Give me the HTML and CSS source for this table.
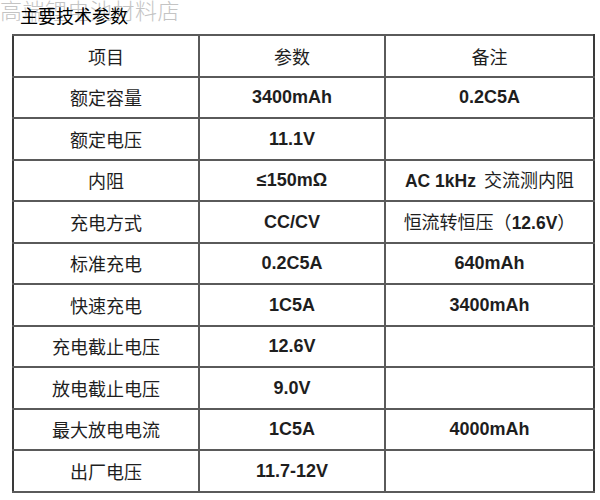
FILE: index.html
```html
<!DOCTYPE html>
<html lang="zh">
<head>
<meta charset="utf-8">
<link rel="stylesheet" href="styles.css">
</head>
<body>
<div class="page">
  <div class="watermark">高端锂电池材料店</div>
  <h1 class="title">主要技术参数</h1>
  <table class="spec">
    <colgroup><col class="c1"><col class="c2"><col class="c3"></colgroup>
    <tr class="head"><td>项目</td><td>参数</td><td>备注</td></tr>
    <tr><td>额定容量</td><td class="num">3400mAh</td><td class="num">0.2C5A</td></tr>
    <tr><td>额定电压</td><td class="num">11.1V</td><td></td></tr>
    <tr><td>内阻</td><td class="num">≤150mΩ</td><td><b class="n">AC 1kHz</b>&nbsp; 交流测内阻</td></tr>
    <tr><td>充电方式</td><td class="num">CC/CV</td><td>恒流转恒压（<b class="n">12.6V</b>）</td></tr>
    <tr><td>标准充电</td><td class="num">0.2C5A</td><td class="num">640mAh</td></tr>
    <tr><td>快速充电</td><td class="num">1C5A</td><td class="num">3400mAh</td></tr>
    <tr><td>充电截止电压</td><td class="num">12.6V</td><td></td></tr>
    <tr><td>放电截止电压</td><td class="num">9.0V</td><td></td></tr>
    <tr><td>最大放电电流</td><td class="num">1C5A</td><td class="num">4000mAh</td></tr>
    <tr><td>出厂电压</td><td class="num">11.7-12V</td><td></td></tr>
  </table>
</div>
</body>
</html>
```
FILE: styles.css
```css
html, body {
  margin: 0;
  padding: 0;
  background: #fff;
}
.page {
  position: relative;
  width: 600px;
  height: 500px;
  overflow: hidden;
  font-family: "Noto Sans CJK SC", "Liberation Serif", serif;
  color: #1e1e1e;
}
.watermark {
  position: absolute;
  left: 0;
  top: -3px;
  font-family: "Liberation Serif", "Noto Sans CJK SC", serif;
  font-size: 22px;
  line-height: 30px;
  color: #c4c4c4;
  font-weight: 300;
  letter-spacing: 0.5px;
}
.title {
  position: relative;
  margin: 0;
  padding: 3px 0 0 20px;
  height: 34px;
  box-sizing: border-box;
  font-size: 18px;
  line-height: 24px;
  font-weight: 400;
  color: #000;
}
.spec {
  margin-left: 12px;
  width: 581px;
  border-collapse: collapse;
  table-layout: fixed;
  border: 2px solid #3a3a3a;
}
.c1 { width: 186px; }
.c2 { width: 186px; }
.c3 { width: 209px; }
.spec tr {
  height: 41.5px;
}
.spec td {
  border: 2px solid #5a5a5a;
  padding: 0;
  text-align: center;
  vertical-align: middle;
  font-size: 18px;
  line-height: 22px;
  white-space: nowrap;
}
.spec td:first-child { border-left-color: #3a3a3a; }
.spec td:last-child { border-right-color: #3a3a3a; }
.num, .n {
  font-family: "Liberation Sans", Arial, sans-serif;
  font-weight: 700;
  font-size: 17.5px;
}
```
